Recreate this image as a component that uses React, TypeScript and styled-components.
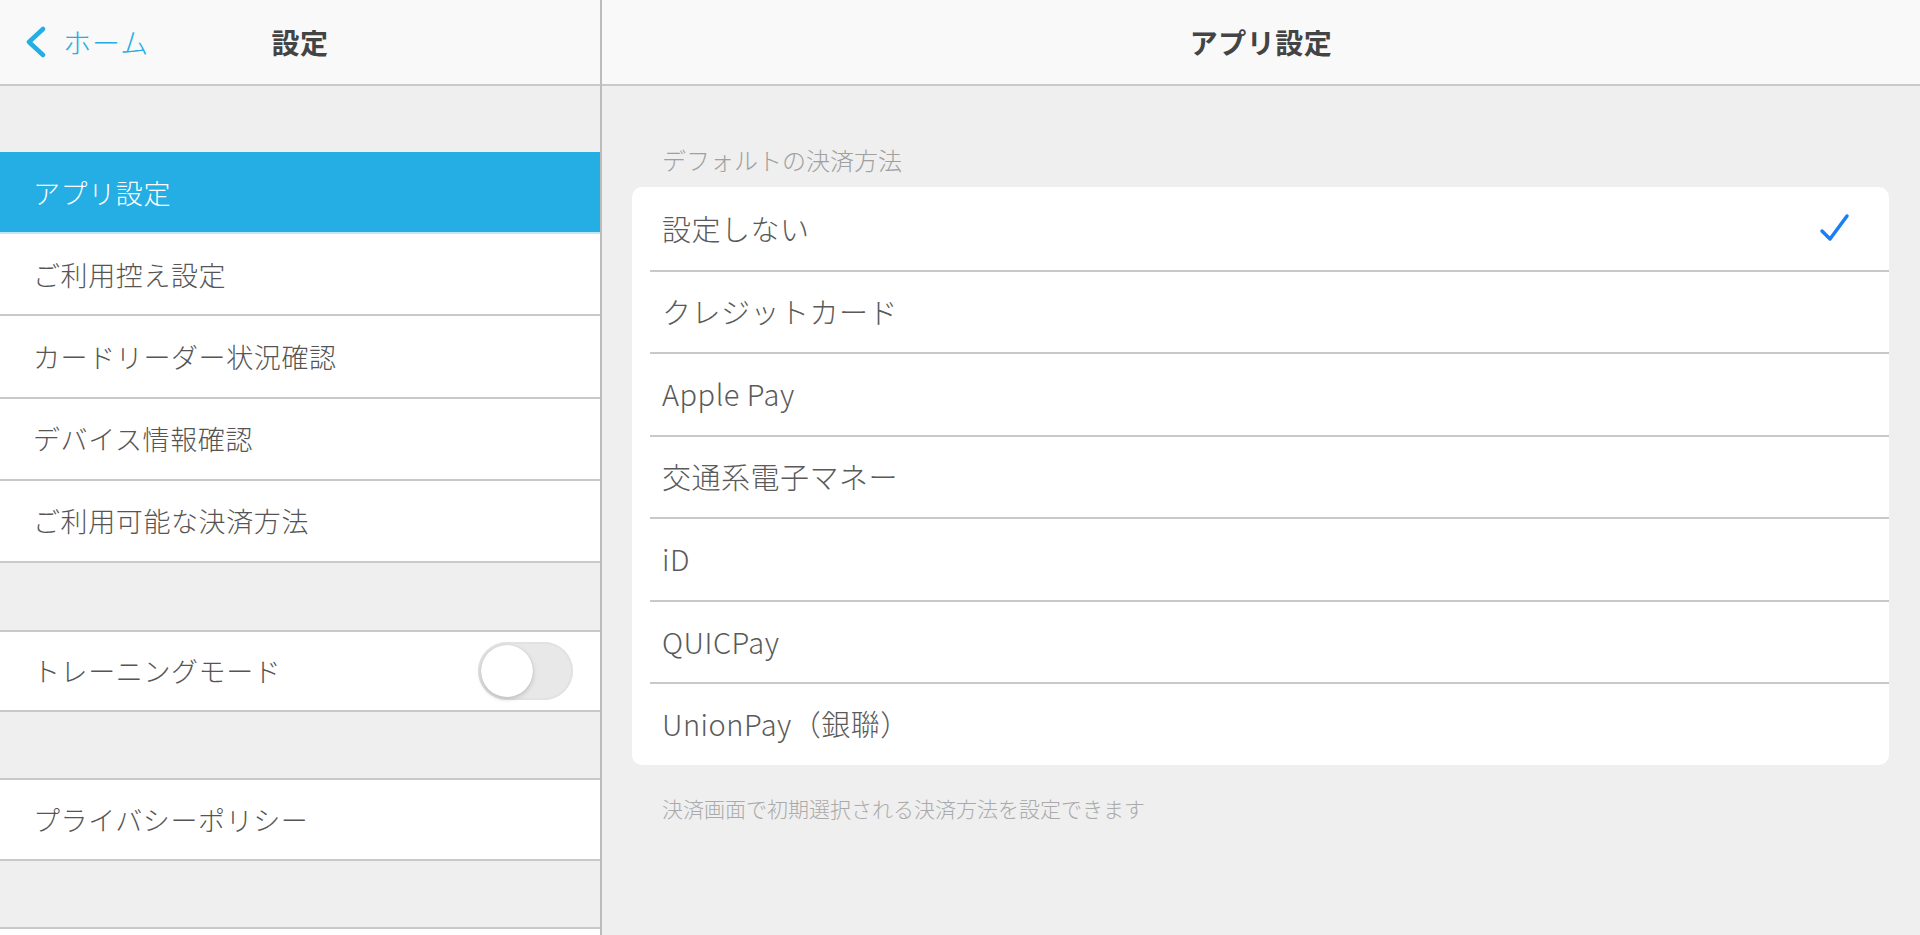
import React, { FC } from 'react';
import styled, { createGlobalStyle } from 'styled-components';

const GlobalStyle = createGlobalStyle`
    html, body {
        margin: 0;
        padding: 0;
        height: 100%;
        overflow: hidden;
    }
    body {
        font-family: "Noto Sans CJK JP", "Noto Sans", sans-serif;
        background: #efefef;
        color: #555;
    }
`;

const ACCENT = '#24aee4';
const LINE = '#c9c9c9';

const Page = styled.div`
    display: flex;
    height: 935px;
    background: #efefef;
`;

const Sidebar = styled.aside`
    width: 600px;
    flex-shrink: 0;
    display: flex;
    flex-direction: column;
    border-right: 2px solid #bcbcbc;
`;

const Main = styled.main`
    flex: 1;
    display: flex;
    flex-direction: column;
`;

const NavBar = styled.header`
    height: 84px;
    flex-shrink: 0;
    display: grid;
    grid-template-columns: 1fr auto 1fr;
    align-items: center;
    background: #f9f9f9;
    border-bottom: 2px solid ${LINE};
`;

const NavTitle = styled.h1`
    grid-column: 2;
    margin: 0;
    font-size: 28px;
    font-weight: 700;
    color: #444;
    letter-spacing: 0.5px;
`;

const BackButton = styled.button`
    grid-column: 1;
    justify-self: start;
    display: flex;
    align-items: center;
    gap: 15px;
    margin: 0 0 0 24px;
    padding: 0;
    border: none;
    background: none;
    color: ${ACCENT};
    font-family: inherit;
    font-size: 28px;
    font-weight: 300;
    letter-spacing: 1px;
    cursor: pointer;
`;

const Group = styled.ul<{ $top: number; $border?: boolean }>`
    list-style: none;
    margin: ${({ $top }) => $top}px 0 0;
    padding: 0;
    background: #fff;
    border-top: ${({ $border }) => ($border ? `2px solid ${LINE}` : 'none')};
`;

const NavRow = styled.li<{ $active?: boolean; $h?: number }>`
    display: flex;
    align-items: center;
    justify-content: space-between;
    height: ${({ $h }) => $h ?? 80.2}px;
    padding: 0 27px 0 33px;
    border-bottom: 2px solid ${({ $active }) => ($active ? '#bfe6f6' : LINE)};
    background: ${({ $active }) => ($active ? ACCENT : '#fff')};
    color: ${({ $active }) => ($active ? '#fff' : '#555')};
    font-size: 27px;
    font-weight: 300;
    letter-spacing: 0.6px;
`;

const SwitchTrack = styled.span`
    position: relative;
    width: 95px;
    height: 58px;
    border-radius: 29px;
    background: #e8e8e8;
    box-shadow: inset 0 0 0 2px #e2e2e2;
`;

const SwitchKnob = styled.span`
    position: absolute;
    left: 3px;
    top: 3px;
    width: 52px;
    height: 52px;
    border-radius: 50%;
    background: #fff;
    box-shadow: 0 2px 5px rgba(0, 0, 0, 0.18), 0 0 1px rgba(0, 0, 0, 0.2);
`;

const Content = styled.section`
    padding: 0 31px 0 30px;
`;

const SectionLabel = styled.div`
    margin-top: 58px;
    padding-left: 30px;
    font-size: 24px;
    font-weight: 300;
    line-height: 32px;
    color: #a0a0a0;
`;

const Card = styled.ul`
    list-style: none;
    margin: 11px 0 0;
    padding: 0;
    background: #fff;
    border-radius: 10px;
    overflow: hidden;
`;

const OptionRow = styled.li`
    position: relative;
    display: flex;
    align-items: center;
    justify-content: space-between;
    height: 82.5px;
    padding: 0 38px 0 30px;
    box-sizing: border-box;
    font-size: 29px;
    font-weight: 300;
    color: #5a5a5a;
    letter-spacing: 0.5px;

    & + &::before {
        content: '';
        position: absolute;
        top: 0;
        left: 18px;
        right: 0;
        height: 2px;
        background: ${LINE};
    }
`;

const Footnote = styled.p`
    margin: 28px 0 0;
    padding-left: 30px;
    font-size: 21px;
    font-weight: 300;
    color: #aaa;
`;

const Chevron: FC = () => (
    <svg width="24" height="32" viewBox="0 0 24 32" fill="none">
        <path d="M19 3 L5 16 L19 29" stroke={ACCENT} strokeWidth="4.5" strokeLinecap="round" strokeLinejoin="round" />
    </svg>
);

const Check: FC = () => (
    <svg width="32" height="30" viewBox="0 0 32 30" fill="none">
        <path d="M3 18 L11 26 L28 3" stroke="#1a7ef7" strokeWidth="3.5" strokeLinecap="round" strokeLinejoin="round" />
    </svg>
);

const menu = ['アプリ設定', 'ご利用控え設定', 'カードリーダー状況確認', 'デバイス情報確認', 'ご利用可能な決済方法'];
const payments = ['設定しない', 'クレジットカード', 'Apple Pay', '交通系電子マネー', 'iD', 'QUICPay', 'UnionPay（銀聯）'];

export default function App() {
    return (
        <>
            <GlobalStyle />
            <Page>
                <Sidebar>
                    <NavBar>
                        <BackButton>
                            <Chevron />
                            ホーム
                        </BackButton>
                        <NavTitle>設定</NavTitle>
                    </NavBar>

                    <Group $top={66}>
                        {menu.map((label, i) => (
                            <NavRow key={label} $active={i === 0}>
                                {label}
                            </NavRow>
                        ))}
                    </Group>

                    <Group $top={67} $border>
                        <NavRow $h={78}>
                            トレーニングモード
                            <SwitchTrack>
                                <SwitchKnob />
                            </SwitchTrack>
                        </NavRow>
                    </Group>

                    <Group $top={66} $border>
                        <NavRow $h={79}>プライバシーポリシー</NavRow>
                    </Group>

                    <Group $top={66} $border>
                        <NavRow $h={78} />
                    </Group>
                </Sidebar>

                <Main>
                    <NavBar>
                        <NavTitle>アプリ設定</NavTitle>
                    </NavBar>
                    <Content>
                        <SectionLabel>デフォルトの決済方法</SectionLabel>
                        <Card>
                            {payments.map((name, i) => (
                                <OptionRow key={name}>
                                    {name}
                                    {i === 0 && <Check />}
                                </OptionRow>
                            ))}
                        </Card>
                        <Footnote>決済画面で初期選択される決済方法を設定できます</Footnote>
                    </Content>
                </Main>
            </Page>
        </>
    );
}
